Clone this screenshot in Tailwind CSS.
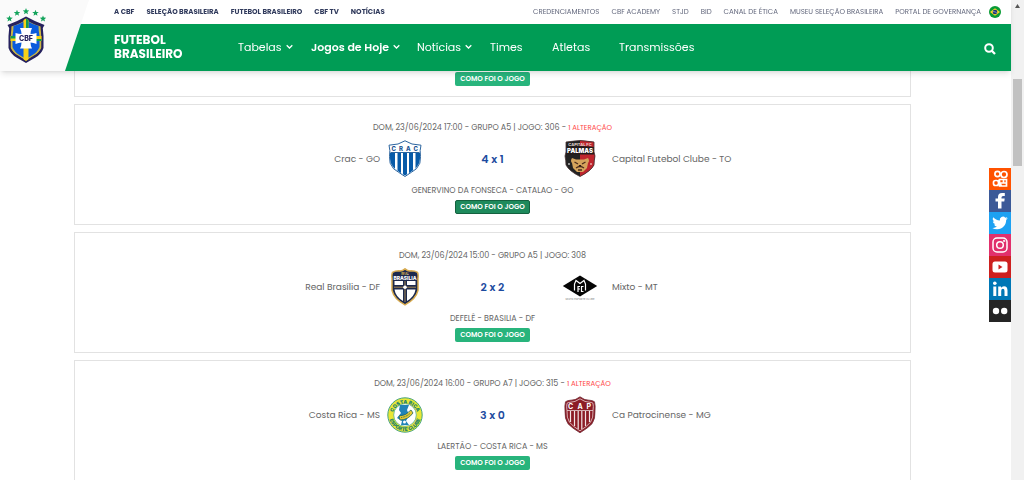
<!DOCTYPE html>
<html lang="pt-BR">
<head>
    <meta charset="UTF-8">
    <meta name="viewport" content="width=device-width, initial-scale=1.0">
    <title>Jogos de Hoje - Futebol Brasileiro</title>
    <script src="https://cdn.jsdelivr.net/npm/@tailwindcss/browser@4"></script>
</head>
<body class="h-screen overflow-hidden bg-white font-[Poppins,Inter,sans-serif] text-[#666]">
    <!-- Header -->
    <header class="fixed inset-x-0 top-0 z-20 mr-[13px] bg-white shadow-md">
        <div class="flex h-6 items-center justify-between pl-[114px] pr-[10px] text-[7px] leading-3">
            <nav class="flex gap-3 whitespace-nowrap font-bold text-[#303a5c]">
                <a href="#">A CBF</a>
                <a href="#">SELEÇÃO BRASILEIRA</a>
                <a href="#">FUTEBOL BRASILEIRO</a>
                <a href="#">CBF TV</a>
                <a href="#">NOTÍCIAS</a>
            </nav>
            <nav class="flex items-center gap-3 whitespace-nowrap text-[#62677c]">
                <a href="#">CREDENCIAMENTOS</a>
                <a href="#">CBF ACADEMY</a>
                <a href="#">STJD</a>
                <a href="#">BID</a>
                <a href="#">CANAL DE ÉTICA</a>
                <a href="#">MUSEU SELEÇÃO BRASILEIRA</a>
                <a href="#">PORTAL DE GOVERNANÇA</a>
                <a href="#" aria-label="Português" class="-ml-1">
                    <svg class="size-3" viewBox="0 0 12 12">
                        <circle cx="6" cy="6" r="6" fill="#089b35"/>
                        <path d="M1 6l5-3.800L11 6 6 9.800z" fill="#f6d32b"/>
                        <circle cx="6" cy="6" r="2.300" fill="#1c3578"/>
                        <path d="M3.900 5.500q2.500 0 4 1.500" stroke="#dfe6f5" stroke-width=".5" fill="none"/>
                    </svg>
                </a>
            </nav>
        </div>
        <div class="flex h-[47px] items-center bg-[#009c55] pb-0.5 pl-[114px] pr-[15px] text-white">
            <h1 class="w-[124px] text-[12px] font-bold leading-[14px]">FUTEBOL<br>BRASILEIRO</h1>
            <nav class="grid grid-cols-[73px_106px_73px_62px_67px_auto] whitespace-nowrap text-[11px] leading-4">
                <a href="#" class="flex items-center gap-1">Tabelas
                    <svg class="size-[7px]" viewBox="0 0 7 7" fill="none" stroke="currentColor" stroke-width="1.300"><path d="M.7 2.300L3.500 5l2.800-2.700"/></svg>
                </a>
                <a href="#" class="flex items-center gap-1 font-semibold">Jogos de Hoje
                    <svg class="size-[7px]" viewBox="0 0 7 7" fill="none" stroke="currentColor" stroke-width="1.300"><path d="M.7 2.300L3.500 5l2.800-2.700"/></svg>
                </a>
                <a href="#" class="flex items-center gap-1">Notícias
                    <svg class="size-[7px]" viewBox="0 0 7 7" fill="none" stroke="currentColor" stroke-width="1.300"><path d="M.7 2.300L3.500 5l2.800-2.700"/></svg>
                </a>
                <a href="#">Times</a>
                <a href="#">Atletas</a>
                <a href="#">Transmissões</a>
            </nav>
            <button type="button" aria-label="Buscar" class="ml-auto mt-1">
                <svg class="size-3" viewBox="0 0 12 12" fill="none" stroke="currentColor" stroke-width="2"><circle cx="5" cy="5" r="3.800"/><path d="M7.800 7.800L11 11" stroke-width="2.300"/></svg>
            </button>
        </div>
        <!-- Logo over both bars -->
        <a href="#" aria-label="CBF" class="absolute inset-y-0 left-0 w-[89px] bg-[#fafafa] [clip-path:polygon(0_0,100%_0,73%_100%,0_100%)]">
            <svg class="h-full w-[52px]" viewBox="0 0 52 71">
                <defs>
                    <path id="star" d="M0-3.300L.9-1.100 3.300-1 1.400.5 2 2.800 0 1.500-2 2.800-1.400.5-3.300-1-.9-1.100z"/>
                    <clipPath id="cbf-shield"><path d="M26 18.500q6 4 14.500 6.500 0 5 1 11V48q-2 5-7.500 8l-8 5-8-5q-5.500-3-7.500-8V36q1-6 1-11Q20 22.500 26 18.500z"/></clipPath>
                </defs>
                <g fill="#14a45c">
                    <use href="#star" x="9.500" y="18.700"/><use href="#star" x="17" y="13"/><use href="#star" x="26" y="11.400"/><use href="#star" x="35.500" y="13"/><use href="#star" x="43" y="18.700"/>
                </g>
                <path d="M26 16.500q8 4.500 18.500 8.500l-1.700 3 .7 8v12q-2 6-8 9.500L26 63l-9.500-5.500q-6-3.500-8-9.500V36l.7-8-1.700-3Q18 21 26 16.500z" fill="#25215e"/>
                <g clip-path="url(#cbf-shield)">
                    <path d="M11 26.500Q20 24 26 19.500q6 4.500 15 7 0 5 .5 10V47.500q-2 5-7.500 8L26 60.500l-8-5q-5.500-3-7.500-8v-11q.5-5 .5-10z" fill="#c9b545"/>
                    <path d="M26 20.500q6 3.500 12.500 5.500 0 5 1 10V47q-2 5-7 8L26 59l-6.500-4q-5-3-7-8V36q1-5 1-10Q20 24 26 20.500z" fill="#0b5bdc"/>
                    <path d="M23.500 16h5v47h-5zM8 36h36v5H8z" fill="#f7d117"/>
                    <path d="M26 16h2.500v20H26zM8 36h10v2.500H8zM34 39h10v2H34z" fill="#129c50"/>
                </g>
                <path d="M20 28h12q-1.500 3-1.500 6 3 0 6-1v11q-3-1.500-6-1.500 0 3 1.500 6H20q1.500-3 1.500-6-3 0-6 1.500V33q3 1 6 1 0-3-1.500-6z" fill="#fff"/>
                <text x="26" y="40.500" text-anchor="middle" font-family="Inter,sans-serif" font-size="7" font-weight="800" fill="#25215e">CBF</text>
            </svg>
        </a>
    </header>

    <!-- Games -->
    <main class="-mt-6 mr-[13px] flex flex-col gap-[7px] pl-[74px] pr-[100px] text-center text-[8px] leading-3">
        <article class="border border-[#e2e2e2] pb-[10px] pt-[17px]">
            <p class="h-3"></p>
            <div class="mt-1.5 h-[38px]"></div>
            <p class="mt-[7px] h-3"></p>
            <button type="button" class="mt-[3px] block h-[14px] w-[75px] mx-auto rounded-[2px] bg-[#28b47c] text-[7px] font-semibold leading-[14px] text-white whitespace-nowrap">COMO FOI O JOGO</button>
        </article>

        <article class="border border-[#e2e2e2] pb-[10px] pt-[17px]">
            <p>DOM, 23/06/2024 17:00 - GRUPO A5 | JOGO: 306 - <a href="#" class="text-[7px] text-[#ff4545]">1 ALTERAÇÃO</a></p>
            <div class="mt-1.5 grid h-[38px] grid-cols-[1fr_36px_139px_36px_1fr] items-center text-[9px]">
                <span class="pr-[7px] text-right">Crac - GO</span>
                <svg class="h-[38px] w-9" viewBox="0 0 36 38">
                    <path d="M18 .8Q12 5 2 5.200q1.500 5 .5 11.500-.7 7 4 12Q11 32 18 36.500 25 32 29.500 28.700q4.700-5 4-12Q32.500 10.200 34 5.200 24 5 18 .8z" fill="#fff" stroke="#2c659f"/>
                    <clipPath id="crac"><path d="M3 13h30v3q.5 7-4 12-4 3.500-11 7.500Q11 31.500 7 28q-4.500-5-4-12z"/></clipPath>
                    <g clip-path="url(#crac)"><path d="M2 13h32v24H2z" fill="#075aa8"/><path d="M8 13h2.500v24H8zM14 13h2v24h-2zM20 13h2v24h-2zM26 13h2.500v24H26z" fill="#fff"/></g>
                    <path d="M3.500 12.500h29" stroke="#2c659f"/>
                    <text y="11" font-family="Inter,sans-serif" font-size="6" font-weight="800" fill="#1c5593"><tspan x="4.500">C</tspan><tspan x="12">R</tspan><tspan x="19">A</tspan><tspan x="26.500">C</tspan></text>
                </svg>
                <strong class="text-[11px] font-semibold text-[#1c4b9f]">4 x 1</strong>
                <svg class="h-[38px] w-9" viewBox="0 0 36 38">
                    <path d="M4 2Q18-1 32 2v10l1 4q-1 5-1 9Q29 31 18 36.500 7 31 4 25q0-4-1-9l1-4z" fill="#222"/>
                    <path d="M18 .5Q26 .5 32 2v10l1 4q-1 5-1 9-3 6-14 11.500z" fill="#bf252d"/>
                    <path d="M4 7Q18 5 32 7v7.500H4z" fill="#241b1b"/>
                    <path d="M4 2Q18-1 32 2v10l1 4q-1 5-1 9Q29 31 18 36.500 7 31 4 25q0-4-1-9l1-4z" fill="none" stroke="#463232" stroke-width=".8"/>
                    <text x="18" y="5.500" text-anchor="middle" font-family="Inter,sans-serif" font-size="4" font-weight="700" fill="#e6d8d0">CAPITAL FC</text>
                    <text x="18" y="13" text-anchor="middle" font-family="Inter,sans-serif" font-size="6" font-weight="900" fill="#fff">PALMAS</text>
                    <path d="M10 18l4 1.500h8l4-1.500q2 3 0 5l-1 5-4 4h-6l-4-4-1-5q-2-2 0-5z" fill="#d5a45c"/>
                    <path d="M12.500 22l3.500 2M23.500 22L20 24M14 28q4-3 8 0M16 30h4" stroke="#4b2c1c" stroke-width="1.300" fill="none"/>
                    <path d="M16.500 25h3L18 27z" fill="#281713"/>
                    <circle cx="7" cy="24" r="1" fill="#bbb"/><circle cx="29" cy="24" r="1" fill="#e8aaa9"/>
                </svg>
                <span class="pl-[14px] text-left">Capital Futebol Clube - TO</span>
            </div>
            <p class="mt-[7px]">GENERVINO DA FONSECA - CATALAO - GO</p>
            <button type="button" class="mt-[3px] block h-[14px] w-[75px] mx-auto rounded-[2px] border border-[#14613f] bg-[#1e8a5c] text-[7px] font-semibold leading-3 text-white whitespace-nowrap">COMO FOI O JOGO</button>
        </article>

        <article class="border border-[#e2e2e2] pb-[10px] pt-[17px]">
            <p>DOM, 23/06/2024 15:00 - GRUPO A5 | JOGO: 308</p>
            <div class="mt-1.5 grid h-[38px] grid-cols-[1fr_36px_139px_36px_1fr] items-center text-[9px]">
                <span class="pr-[7px] text-right">Real Brasília - DF</span>
                <svg class="h-[38px] w-9" viewBox="0 0 36 38">
                    <path d="M18 .8q3 2.500 6 2 4 0 6.500 1.500 1 2 .5 6v12Q29 31 18 36.800 7 31 5 22.300v-12q-.5-4 .5-6Q8 2.800 12 2.800q3 .5 6-2z" fill="#1c294d" stroke="#d8ab4f" stroke-width="1.500"/>
                    <path d="M7.500 13H16v4H7.500zM20 13h8.500v4H20zM7.500 21.500H16V33q-7.500-4.500-8.500-11.500zM20 21.500h8.500Q27.500 28.500 20 33z" fill="#fff"/>
                    <path d="M18 13v21M7 19.200h22" stroke="#c59f55" stroke-width=".8"/>
                    <circle cx="18" cy="19.200" r="1.800" fill="#fff"/>
                    <text x="18" y="6.500" text-anchor="middle" font-family="Inter,sans-serif" font-size="3" font-weight="700" fill="#d8ab4f">REAL</text>
                    <text x="18" y="11.500" text-anchor="middle" font-family="Inter,sans-serif" font-size="5" font-weight="800" fill="#fff">BRASÍLIA</text>
                </svg>
                <strong class="text-[11px] font-semibold text-[#1c4b9f]">2 x 2</strong>
                <svg class="h-[38px] w-9" viewBox="0 0 36 38">
                    <path d="M.8 18L18 7.500 35.200 18 18 28.500z" fill="#050505"/>
                    <path d="M12.500 22.500V16l1.500-3.500 4 3 4-3 1.500 3.500v6.500M16 24v-6M16 18.500h2M16 21h2M21.500 18.500H19.500V23.500h2" fill="none" stroke="#fff" stroke-width="1.200"/>
                    <text x="18" y="31.500" text-anchor="middle" font-family="Inter,sans-serif" font-size="2.500" fill="#777">MIXTO ESPORTE CLUBE</text>
                </svg>
                <span class="pl-[14px] text-left">Mixto - MT</span>
            </div>
            <p class="mt-[7px]">DEFELÊ - BRASILIA - DF</p>
            <button type="button" class="mt-[3px] block h-[14px] w-[75px] mx-auto rounded-[2px] bg-[#28b47c] text-[7px] font-semibold leading-[14px] text-white whitespace-nowrap">COMO FOI O JOGO</button>
        </article>

        <article class="border border-[#e2e2e2] pb-[10px] pt-[17px]">
            <p>DOM, 23/06/2024 16:00 - GRUPO A7 | JOGO: 315 - <a href="#" class="text-[7px] text-[#ff4545]">1 ALTERAÇÃO</a></p>
            <div class="mt-1.5 grid h-[38px] grid-cols-[1fr_36px_139px_36px_1fr] items-center text-[9px]">
                <span class="pr-[7px] text-right">Costa Rica - MS</span>
                <svg class="h-[38px] w-9" viewBox="0 0 36 38">
                    <circle cx="18" cy="19" r="17.200" fill="#e9e735" stroke="#46a485"/>
                    <circle cx="18" cy="19" r="11.300" fill="#fff" stroke="#46a485" stroke-width=".7"/>
                    <path id="cr-top" d="M5.500 20a12.500 12.500 0 0 1 25 0" fill="none"/>
                    <path id="cr-bottom" d="M2 19a16 16 0 0 0 32 0" fill="none"/>
                    <g font-family="Inter,sans-serif" font-size="5" font-weight="900" fill="#24836d" text-anchor="middle">
                        <text><textPath href="#cr-top" startOffset="50%">COSTA RICA</textPath></text>
                        <text><textPath href="#cr-bottom" startOffset="50%">ESPORTE CLUBE</textPath></text>
                    </g>
                    <path d="M13 9h9l-2 5 2 5-3 6 3 4h-8l1-4-5-3 4-5-2-3z" fill="#2083b8"/>
                    <path d="M12 20q7 0 12-6l2 3q-5 7-13 7z" fill="#e7c92d" stroke="#25685d" stroke-width=".8"/>
                    <path d="M14 21.500q5-.5 9-4" stroke="#25685d" stroke-dasharray="1 .7" fill="none"/>
                    <circle cx="17.500" cy="26" r="1.500" fill="#fff"/>
                </svg>
                <strong class="text-[11px] font-semibold text-[#1c4b9f]">3 x 0</strong>
                <svg class="h-[38px] w-9" viewBox="0 0 36 38">
                    <path d="M18 .8q5 4 10 3.500 2.500 0 4.500 1.500 1 4 .5 9 .5 8-3 13Q26 32 18 36.800 10 32 6 27.800q-3.500-5-3-13-.5-5 .5-9Q5.500 4.300 8 4.300q5 .5 10-3.500z" fill="#8c1c26" stroke="#74303a" stroke-width=".8"/>
                    <path d="M18 2.800q5 3.500 10 3.500 2 0 3 1 .7 3 0 7.500.5 7-2.500 11.500Q25 30.500 18 34.800 11 30.500 7.500 26.300 4.500 21.800 5 14.800q-.7-4.500 0-7.500 1-1 3-1 5 0 10-3.500zM5 14.500h26" fill="none" stroke="#e9d4d5" stroke-width=".8"/>
                    <path d="M8.500 15v11M12.500 15v15M16.200 15v18M19.800 15v18M23.500 15v15M27.500 15v11" stroke="#f2e4e5" stroke-width="1.200"/>
                    <text y="13" font-family="Inter,sans-serif" font-size="7" font-weight="700" fill="#fff"><tspan x="6">C</tspan><tspan x="15.500">A</tspan><tspan x="24.500">P</tspan></text>
                </svg>
                <span class="pl-[14px] text-left">Ca Patrocinense - MG</span>
            </div>
            <p class="mt-[7px]">LAERTÃO - COSTA RICA - MS</p>
            <button type="button" class="mt-[3px] block h-[14px] w-[75px] mx-auto rounded-[2px] bg-[#28b47c] text-[7px] font-semibold leading-[14px] text-white whitespace-nowrap">COMO FOI O JOGO</button>
        </article>
    </main>

    <!-- Social -->
    <nav class="fixed right-[13px] top-[35%] z-10 w-[22px] text-white">
        <a href="#" aria-label="Kwai" class="block bg-[#ff5200]">
            <svg class="size-[22px]" viewBox="0 0 22 22" fill="none" stroke="currentColor" stroke-width="1.700"><circle cx="8.500" cy="6" r="2.600"/><circle cx="15" cy="6.500" r="3"/><rect x="4.500" y="12.500" width="5" height="5" rx="2"/><path d="M10.500 11.500h7v6.500h-7zM10.500 15h7M9 12l3.500 6M14.500 12v3"/></svg>
        </a>
        <a href="#" aria-label="Facebook" class="block bg-[#3b5998]">
            <svg class="size-[22px]" viewBox="0 0 22 22" fill="currentColor"><path d="M9 18.500v-7H6.500V8.500H9V7q0-4 4-4h2.800v3H14q-1.500 0-1.500 1.500v1h3.200l-.4 3h-2.800v7z"/></svg>
        </a>
        <a href="#" aria-label="Twitter" class="block bg-[#1da1f2]">
            <svg class="size-[22px]" viewBox="-5 -5 34 34" fill="currentColor"><path d="M23.950 4.570a10 10 0 0 1-2.820.77 4.960 4.960 0 0 0 2.160-2.720c-.95.550-2 .950-3.130 1.180a4.920 4.920 0 0 0-8.380 4.480C7.690 8.090 4.070 6.130 1.640 3.160a4.920 4.920 0 0 0 1.520 6.570 4.900 4.900 0 0 1-2.230-.61v.06a4.920 4.920 0 0 0 3.950 4.830 5 5 0 0 1-2.210.08 4.940 4.940 0 0 0 4.600 3.420A9.870 9.870 0 0 1 0 19.540a13.990 13.990 0 0 0 7.550 2.210c9.050 0 14-7.500 14-13.980 0-.21 0-.42-.02-.63a9.940 9.940 0 0 0 2.460-2.550z"/></svg>
        </a>
        <a href="#" aria-label="Instagram" class="block bg-[#e1306c]">
            <svg class="size-[22px]" viewBox="0 0 22 22" fill="none" stroke="currentColor" stroke-width="1.500"><rect x="4" y="4" width="14" height="14" rx="4"/><circle cx="11" cy="11" r="3.300"/><circle cx="15.200" cy="6.900" r=".4"/></svg>
        </a>
        <a href="#" aria-label="YouTube" class="block bg-[#cd201f]">
            <svg class="size-[22px]" viewBox="0 0 22 22"><rect x="3.500" y="5.500" width="15" height="11" rx="2.500" fill="#fff"/><path d="M9.500 8.500v5l4-2.500z" fill="#cd201f"/></svg>
        </a>
        <a href="#" aria-label="LinkedIn" class="block bg-[#0077b5]">
            <svg class="size-[22px]" viewBox="0 0 22 22" fill="currentColor"><circle cx="5.800" cy="5.300" r="1.800"/><path d="M4.300 8.500h3V18h-3zM9.200 8.500H12v1.300q1-1.600 3-1.600 3.500 0 3.500 4.300V18h-3v-5q0-2.300-1.600-2.300-1.700 0-1.700 2.300v5h-3z"/></svg>
        </a>
        <a href="#" aria-label="Flickr" class="block bg-[#252525]">
            <svg class="size-[22px]" viewBox="0 0 22 22" fill="currentColor"><circle cx="7" cy="11" r="3.200"/><circle cx="15.200" cy="11" r="3.200"/></svg>
        </a>
    </nav>

    <!-- Scrollbar -->
    <div class="fixed inset-y-0 right-0 w-[13px] bg-[#f1f1f1] px-0.5 pt-1" aria-hidden="true">
        <svg class="mx-auto h-1 w-[5px]" viewBox="0 0 5 4"><path d="M2.500 0L5 4H0z" fill="#555"/></svg>
        <div class="mt-[71px] h-[87px] bg-[#c1c1c1]"></div>
    </div>
</body>
</html>
